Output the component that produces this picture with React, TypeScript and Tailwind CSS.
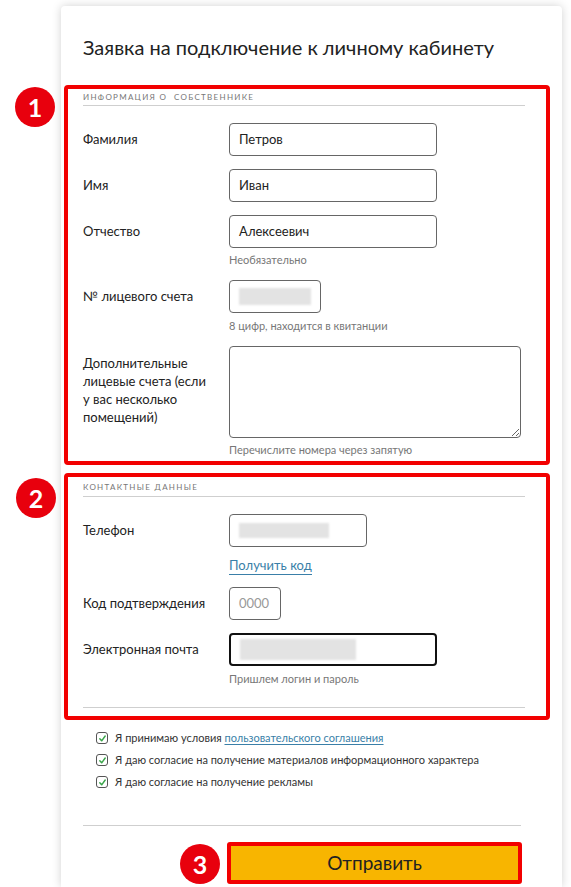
import React from 'react';

const Badge: React.FC<{ n: number; className: string }> = ({ n, className }) => (
  <div
    className={`absolute w-[40px] h-[40px] rounded-full bg-[#e8000d] text-white text-[25px] font-bold flex items-center justify-center leading-none ${className}`}
  >
    {n}
  </div>
);

const Field: React.FC<{ label: string; children: React.ReactNode; className?: string }> = ({ label, children, className = '' }) => (
  <div className={`flex items-center ${className}`}>
    <div className="w-[146px] shrink-0 text-[13px] text-[#222]">{label}</div>
    {children}
  </div>
);

const Hint: React.FC<{ text: string; className?: string }> = ({ text, className = '' }) => (
  <div className={`pl-[146px] text-[11px] leading-[14px] text-[#777] ${className}`}>{text}</div>
);

const Box: React.FC<{ w: string; children?: React.ReactNode; dark?: boolean }> = ({ w, children, dark }) => (
  <div
    className={`${w} h-[33px] rounded-[4px] flex items-center px-[9px] text-[13px] text-[#222] ${
      dark ? 'border-2 border-[#111]' : 'border border-[#666]'
    }`}
  >
    {children}
  </div>
);

const Blur: React.FC<{ w: string; h: string }> = ({ w, h }) => (
  <div className={`${w} ${h} bg-[#e3e3e3] blur-[1px]`} />
);

const SectionHead: React.FC<{ text: string; h: string }> = ({ text, h }) => (
  <div className={`${h} mr-[21px] flex items-center border-b border-[#cfcfcf] text-[8px] tracking-[1.3px] text-[#777] uppercase whitespace-pre`}>
    {text}
  </div>
);

const Check: React.FC<{ children: React.ReactNode }> = ({ children }) => (
  <div className="h-[22px] flex items-center">
    <div className="w-[12px] h-[12px] rounded-[3px] border border-[#555] flex items-center justify-center shrink-0">
      <svg width="9" height="9" viewBox="0 0 10 10">
        <path d="M2 5.2 L4.1 7.6 L8 2.2" fill="none" stroke="#3aa54a" strokeWidth="1.6" strokeLinecap="round" strokeLinejoin="round" />
      </svg>
    </div>
    <span className="ml-[7px] text-[11px] text-[#333]">{children}</span>
  </div>
);

const App: React.FC = () => {
  return (
    <div className="min-h-screen w-full bg-white overflow-hidden font-[Lato,'Open_Sans',sans-serif]">
      <div className="ml-[61px] mt-[6px] w-[501px] h-[881px] bg-white rounded-t-[4px] shadow-[0_0_10px_rgba(0,0,0,0.18)]">
        <h1 className="pl-[22px] pt-[29px] text-[20px] leading-[24px] text-[#222]">
          Заявка на подключение к личному кабинету
        </h1>

        {/* owner info */}
        <div className="relative mt-[26px] ml-[3px] w-[486px] border-4 border-[#f20000] rounded-[4px] pl-[15px] pb-[4px]">
          <Badge n={1} className="left-[-53px] top-[-2px]" />
          <SectionHead text="Информация о  собственнике" h="h-[17px]" />
          <Field label="Фамилия" className="mt-[17px]">
            <Box w="w-[208px]">Петров</Box>
          </Field>
          <Field label="Имя" className="mt-[13px]">
            <Box w="w-[208px]">Иван</Box>
          </Field>
          <Field label="Отчество" className="mt-[13px]">
            <Box w="w-[208px]">Алексеевич</Box>
          </Field>
          <Hint text="Необязательно" className="mt-[5px]" />
          <Field label="№ лицевого счета" className="mt-[13px]">
            <Box w="w-[92px]">
              <Blur w="w-[83px]" h="h-[17px]" />
            </Box>
          </Field>
          <Hint text="8 цифр, находится в квитанции" className="mt-[6px]" />
          <div className="flex mt-[13px]">
            <div className="w-[146px] shrink-0 pr-[14px] pt-[8px] text-[13px] leading-[18px] text-[#222]">
              Дополнительные лицевые счета (если у вас несколько помещений)
            </div>
            <textarea className="w-[292px] h-[92px] border border-[#666] rounded-[4px] outline-none" />
          </div>
          <Hint text="Перечислите номера через запятую" className="mt-[5px]" />
        </div>

        {/* contacts */}
        <div className="relative mt-[8px] ml-[3px] w-[486px] border-4 border-[#f20000] rounded-[4px] pl-[15px] pb-[8px]">
          <Badge n={2} className="left-[-52px] top-[1px]" />
          <SectionHead text="Контактные данные" h="h-[20px]" />
          <Field label="Телефон" className="mt-[17px]">
            <Box w="w-[138px]">
              <Blur w="w-[90px]" h="h-[15px]" />
            </Box>
          </Field>
          <div className="pl-[146px] mt-[9px] h-[21px] text-[13px] leading-[18px]">
            <span className="inline-block text-[#3a7fa8] border-b border-[#3a7fa8]">Получить код</span>
          </div>
          <Field label="Код подтверждения" className="mt-[10px]">
            <Box w="w-[52px]">
              <span className="text-[#999]">0000</span>
            </Box>
          </Field>
          <Field label="Электронная почта" className="mt-[13px]">
            <Box w="w-[208px]" dark>
              <Blur w="w-[116px]" h="h-[21px]" />
            </Box>
          </Field>
          <Hint text="Пришлем логин и пароль" className="mt-[6px]" />
          <div className="mt-[21px] mr-[21px] border-b border-[#cfcfcf]" />
        </div>

        {/* agreements */}
        <div className="pl-[35px] mt-[7px]">
          <Check>
            Я принимаю условия{' '}
            <span className="text-[#3a7fa8] underline underline-offset-2">пользовательского соглашения</span>
          </Check>
          <Check>Я даю согласие на получение материалов информационного характера</Check>
          <Check>Я даю согласие на получение рекламы</Check>
        </div>

        <div className="mt-[32px] ml-[22px] mr-[41px] border-b border-[#cfcfcf]" />

        <div className="relative mt-[16px] ml-[166px] w-[295px]">
          <Badge n={3} className="left-[-47px] top-[2px]" />
          <div className="h-[42px] border-4 border-[#f20000] rounded-[3px] bg-[#f8b500] flex items-center justify-center text-[19px] text-[#222]">
            Отправить
          </div>
        </div>
      </div>
    </div>
  );
};

export default App;
